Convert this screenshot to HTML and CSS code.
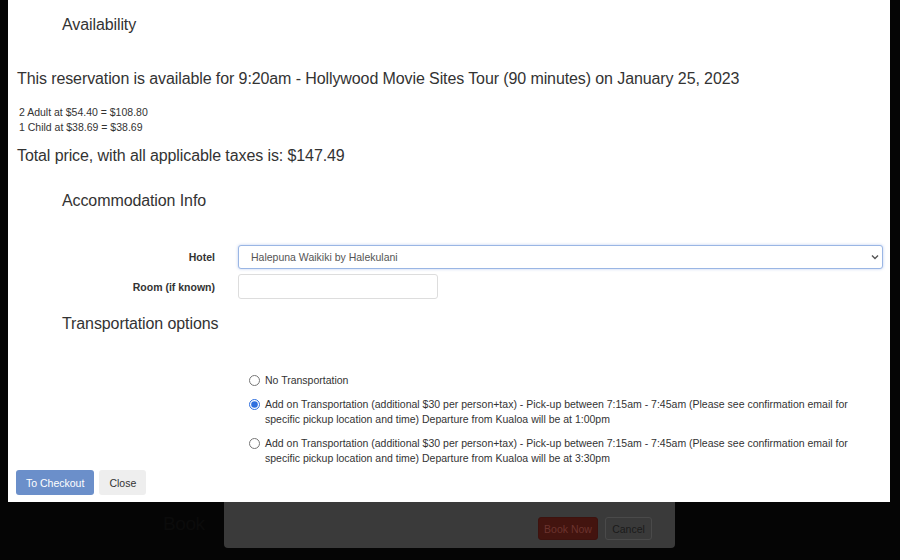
FILE: index.html
```html
<!DOCTYPE html>
<html lang="en">
<head>
    <meta charset="UTF-8">
    <title>Availability</title>
    <link rel="stylesheet" href="styles.css">
</head>
<body>
    <div class="page-behind">
        <div class="behind-title">Book</div>
        <div class="behind-modal">
            <div class="behind-footer">
                <button class="btn-book">Book Now</button>
                <button class="btn-cancel">Cancel</button>
            </div>
        </div>
    </div>

    <div class="modal">
        <h4 class="section-title">Availability</h4>
        <p class="lead first">This reservation is available for 9:20am - Hollywood Movie Sites Tour (90 minutes) on January 25, 2023</p>
        <div class="price-lines">
            <div>2 Adult at $54.40 = $108.80</div>
            <div>1 Child at $38.69 = $38.69</div>
        </div>
        <p class="lead">Total price, with all applicable taxes is: $147.49</p>

        <h4 class="section-title accommodation">Accommodation Info</h4>
        <div class="form-row">
            <label for="hotel">Hotel</label>
            <div class="select-wrap">
                <select id="hotel" class="field focused">
                    <option>Halepuna Waikiki by Halekulani</option>
                </select>
                <svg class="chevron" width="8" height="6" viewBox="0 0 8 6">
                    <path d="M1 1.5 L4 4.5 L7 1.5" fill="none" stroke="#555" stroke-width="1.4"/>
                </svg>
            </div>
        </div>
        <div class="form-row">
            <label for="room">Room (if known)</label>
            <input type="text" id="room" class="field room">
        </div>

        <h4 class="section-title transport">Transportation options</h4>
        <div class="radio-list">
            <label class="radio">
                <input type="radio" name="transport">
                <span>No Transportation</span>
            </label>
            <label class="radio">
                <input type="radio" name="transport" checked>
                <span>Add on Transportation (additional $30 per person+tax) - Pick-up between 7:15am - 7:45am (Please see confirmation email for specific pickup location and time) Departure from Kualoa will be at 1:00pm</span>
            </label>
            <label class="radio">
                <input type="radio" name="transport">
                <span>Add on Transportation (additional $30 per person+tax) - Pick-up between 7:15am - 7:45am (Please see confirmation email for specific pickup location and time) Departure from Kualoa will be at 3:30pm</span>
            </label>
        </div>

        <div class="modal-footer">
            <button class="btn-primary">To Checkout</button>
            <button class="btn-default">Close</button>
        </div>
    </div>
</body>
</html>
```

FILE: styles.css
```css
body {
    margin: 0;
    width: 900px;
    height: 560px;
    overflow: hidden;
    background-color: #050505;
    font-family: "Liberation Sans", Arial, sans-serif;
    color: #333;
    position: relative;
}

button {
    appearance: none;
    white-space: nowrap;
    cursor: pointer;
}

.page-behind {
    position: absolute;
    inset: 0;
}

.behind-title {
    position: absolute;
    left: 163px;
    top: 513px;
    font-size: 19px;
    letter-spacing: -0.4px;
    color: #0b0b0b;
}

.behind-modal {
    position: absolute;
    left: 224px;
    top: 400px;
    width: 451px;
    height: 148px;
    background-color: #3a3a3a;
    border-radius: 4px;
    display: flex;
    flex-direction: column;
    justify-content: flex-end;
}

.behind-footer {
    display: flex;
    justify-content: flex-end;
    gap: 7px;
    padding: 0 23px 8px;
}

.behind-footer button {
    font-family: "Liberation Sans", Arial, sans-serif;
    font-size: 10.5px;
    height: 23px;
    padding: 0;
    border-radius: 3px;
}

.btn-book {
    width: 60px;
    background-color: #43140f;
    border: 1px solid #3d120e;
    color: #6c332e;
}

.btn-cancel {
    width: 47px;
    background-color: #3a3a3a;
    border: 1px solid #4a4a4a;
    color: #1a1a1a;
}

.modal {
    position: absolute;
    left: 8px;
    top: 0;
    width: 882px;
    height: 502px;
    box-sizing: border-box;
    background-color: #fff;
    padding: 0 8px 0 9px;
}

.section-title {
    margin: 15px 0 0 45px;
    font-size: 16px;
    letter-spacing: -0.1px;
    font-weight: normal;
    line-height: 20px;
}

.lead {
    margin: 11px 0 0;
    font-size: 16px;
    letter-spacing: -0.1px;
    line-height: 20px;
}

.lead.first {
    margin-top: 34px;
}

.price-lines {
    margin: 16px 0 0 2px;
    font-size: 10.5px;
    line-height: 15px;
}

.section-title.accommodation {
    margin-top: 25px;
    margin-bottom: 34px;
}

.form-row {
    display: grid;
    grid-template-columns: 198px auto;
    column-gap: 23px;
    align-items: center;
    margin-bottom: 5px;
}

.form-row label {
    text-align: right;
    font-size: 10.5px;
    font-weight: bold;
}

.select-wrap {
    position: relative;
    width: 645px;
    height: 24px;
}

.chevron {
    position: absolute;
    right: 4px;
    top: 9px;
}

.field {
    box-sizing: border-box;
    height: 25px;
    font-family: "Liberation Sans", Arial, sans-serif;
    font-size: 10.5px;
    color: #555;
    border: 1px solid #ccc;
    border-radius: 3px;
    background-color: #fff;
}

.field.focused {
    appearance: none;
    width: 645px;
    height: 24px;
    padding-left: 12px;
    border-color: #9ab6e4;
    box-shadow: 0 0 3px rgba(102, 140, 220, 0.45);
    outline: none;
}

.field.room {
    width: 200px;
    border-color: #ddd;
}

.section-title.transport {
    margin-top: 15px;
}

.radio-list {
    margin: 39px 0 0 231px;
    display: flex;
    flex-direction: column;
    gap: 9px;
}

.radio {
    display: flex;
    align-items: flex-start;
    font-size: 10.5px;
    line-height: 15px;
    color: #333;
    padding-right: 22px;
}

.radio input {
    width: 11px;
    height: 11px;
    margin: 2px 5px 0 1px;
    flex-shrink: 0;
    accent-color: #2f6fde;
}

.modal-footer {
    display: flex;
    gap: 5px;
    margin-top: 4px;
    margin-left: -1px;
}

.modal-footer button {
    height: 25px;
    padding: 0 10px;
    font-family: "Liberation Sans", Arial, sans-serif;
    font-size: 10.5px;
    border: none;
    border-radius: 3px;
}

.btn-primary {
    background-color: #6b8fca;
    color: #fff;
}

.btn-default {
    background-color: #eeeeee;
    color: #333;
}
```
